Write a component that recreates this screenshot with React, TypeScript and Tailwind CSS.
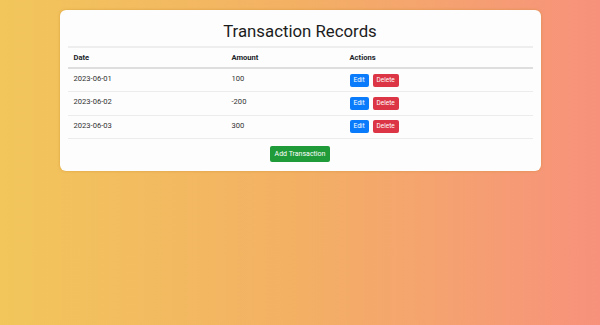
import { useState } from "react";

type Tx = {
  id: number;
  date: string;
  amount: number;
};

const initial: Tx[] = [
  { id: 1, date: "2023-06-01", amount: 100 },
  { id: 2, date: "2023-06-02", amount: -200 },
  { id: 3, date: "2023-06-03", amount: 300 },
];

export default function App() {
  const [rows, setRows] = useState<Tx[]>(initial);

  function add() {
    setRows((r) => [
      ...r,
      { id: r.length + 1, date: "2023-06-04", amount: 0 },
    ]);
  }

  const btn =
    "h-[13px] rounded-[2px] px-[4px] text-[6.5px] leading-[13px] text-white";

  return (
    <div
      className="min-h-[325px] w-full bg-gradient-to-r from-[#f2c65b] via-[#f3b064] to-[#f7917b] pt-[10px]"
      style={{ fontFamily: "Roboto, 'Liberation Sans', sans-serif" }}
    >
      <div className="mx-auto w-[481px] rounded-[6px] bg-[#fdfdfd] px-[8px] pb-[9px] pt-[7px] text-[#212529] shadow-[0_0_3px_rgba(200,140,40,0.6)]">
        <h1 className="text-center text-[16.8px] leading-[28px] text-[#1c1c1c]">
          Transaction Records
        </h1>
        <table className="mt-[1px] w-full border-collapse text-[7.6px]">
          <thead>
            <tr className="border-t-[2px] border-b-[2px] border-t-[#eeeeee] border-b-[#dedede]">
              <th className="w-[158px] px-[6px] py-0 text-left font-bold leading-[19px]">Date</th>
              <th className="w-[118px] px-[6px] text-left font-bold">Amount</th>
              <th className="px-[6px] text-left font-bold">Actions</th>
            </tr>
          </thead>
          <tbody>
            {rows.map((t) => (
              <tr key={t.id} className="h-[23.5px] border-b border-[#ececec]">
                <td className="px-[6px] align-top pt-[4px] text-[#333]">{t.date}</td>
                <td className="px-[6px] align-top pt-[4px] text-[#333]">{t.amount}</td>
                <td className="px-[6px] align-middle">
                  <div className="flex gap-[4px]">
                    <button type="button" className={`${btn} w-[19px] bg-[#0a7bfb]`}>
                      Edit
                    </button>
                    <button type="button" className={`${btn} w-[26px] bg-[#dc3545]`}>
                      Delete
                    </button>
                  </div>
                </td>
              </tr>
            ))}
          </tbody>
        </table>
        <div className="mt-[7px] flex justify-center">
          <button
            type="button"
            onClick={add}
            className="h-[16px] w-[60px] rounded-[2px] bg-[#1f9b3a] text-[7px] leading-[16px] text-white"
          >
            Add Transaction
          </button>
        </div>
      </div>
    </div>
  );
}
